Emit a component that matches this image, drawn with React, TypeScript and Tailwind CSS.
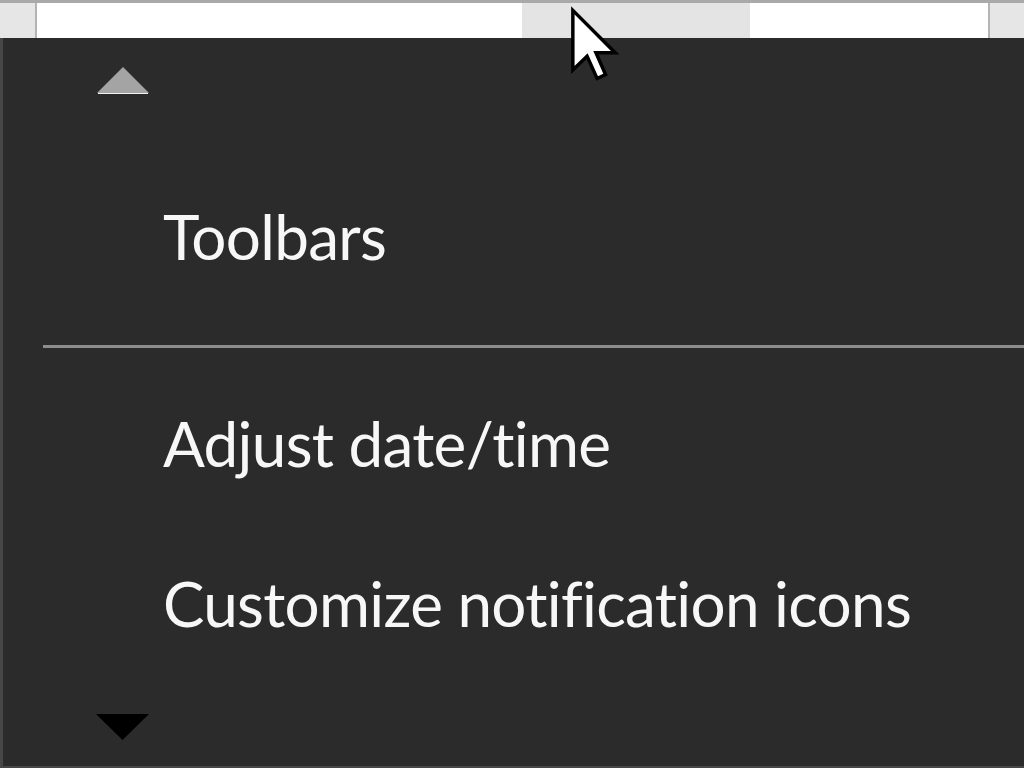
import React from "react";

const items = [
  { label: "Adjust date/time", top: "pt-[64px]" },
  { label: "Customize notification icons", top: "pt-[98px]" },
];

function Cursor() {
  return (
    <svg
      className="absolute left-[569px] top-[6px] z-20"
      width="50"
      height="78"
      viewBox="-0.5 -0.5 13 20"
    >
      <path
        d="M0.5 0.5 L0.5 16 L4.2 12.4 L6.8 18.2 L9 17.2 L6.5 11.5 L11.5 11.5 Z"
        fill="#ffffff"
        stroke="#000000"
        strokeWidth="0.9"
        strokeLinejoin="miter"
      />
    </svg>
  );
}

export default function App() {
  return (
    <div
      className="relative w-[1024px] h-[768px] overflow-hidden bg-[#2b2b2b] [font-variant-ligatures:none]"
      style={{ fontFamily: 'Lato, "Noto Sans", sans-serif' }}
    >
      {/* strip of the window behind the menu */}
      <div className="flex h-[38px] bg-[#e6e6e6] border-t-[3px] border-[#a9a9a9]">
        <div className="w-[35px]" />
        <div className="flex flex-1 bg-white border-x-2 border-[#b4b4b4]">
          <div className="w-[485px]" />
          <div className="w-[228px] bg-[#e4e4e4]" />
          <div className="flex-1" />
        </div>
        <div className="w-[34px]" />
      </div>

      {/* context menu */}
      <div className="flex flex-col h-[730px] bg-[#2b2b2b] border-l-[3px] border-b-2 border-[#474747]">
        <div className="pt-[29px] pl-[94px]">
          <svg width="52" height="27" viewBox="0 0 52 27">
            <polygon points="26,0 52,26 0,26" fill="#a4a4a4" />
            <line x1="1" y1="26.5" x2="51" y2="26.5" stroke="#f0f0f0" strokeWidth="1" />
          </svg>
        </div>

        <div className="pt-[111px] pl-[160px] text-[62px] leading-none tracking-[-0.7px] text-[#f7f7f7]">
          Toolbars
        </div>

        <div className="mt-[78px] ml-[40px] h-[3px] bg-[#8c8c8c]" />

        {items.map((item) => (
          <div
            key={item.label}
            className={`${item.top} pl-[160px] text-[62px] leading-none tracking-[-0.7px] text-[#f7f7f7]`}
          >
            {item.label}
          </div>
        ))}

        <div className="mt-auto mb-[26px] pl-[93px]">
          <svg width="53" height="26" viewBox="0 0 53 26">
            <polygon points="0,0 53,0 26.5,26" fill="#000000" />
          </svg>
        </div>
      </div>

      <Cursor />
    </div>
  );
}
